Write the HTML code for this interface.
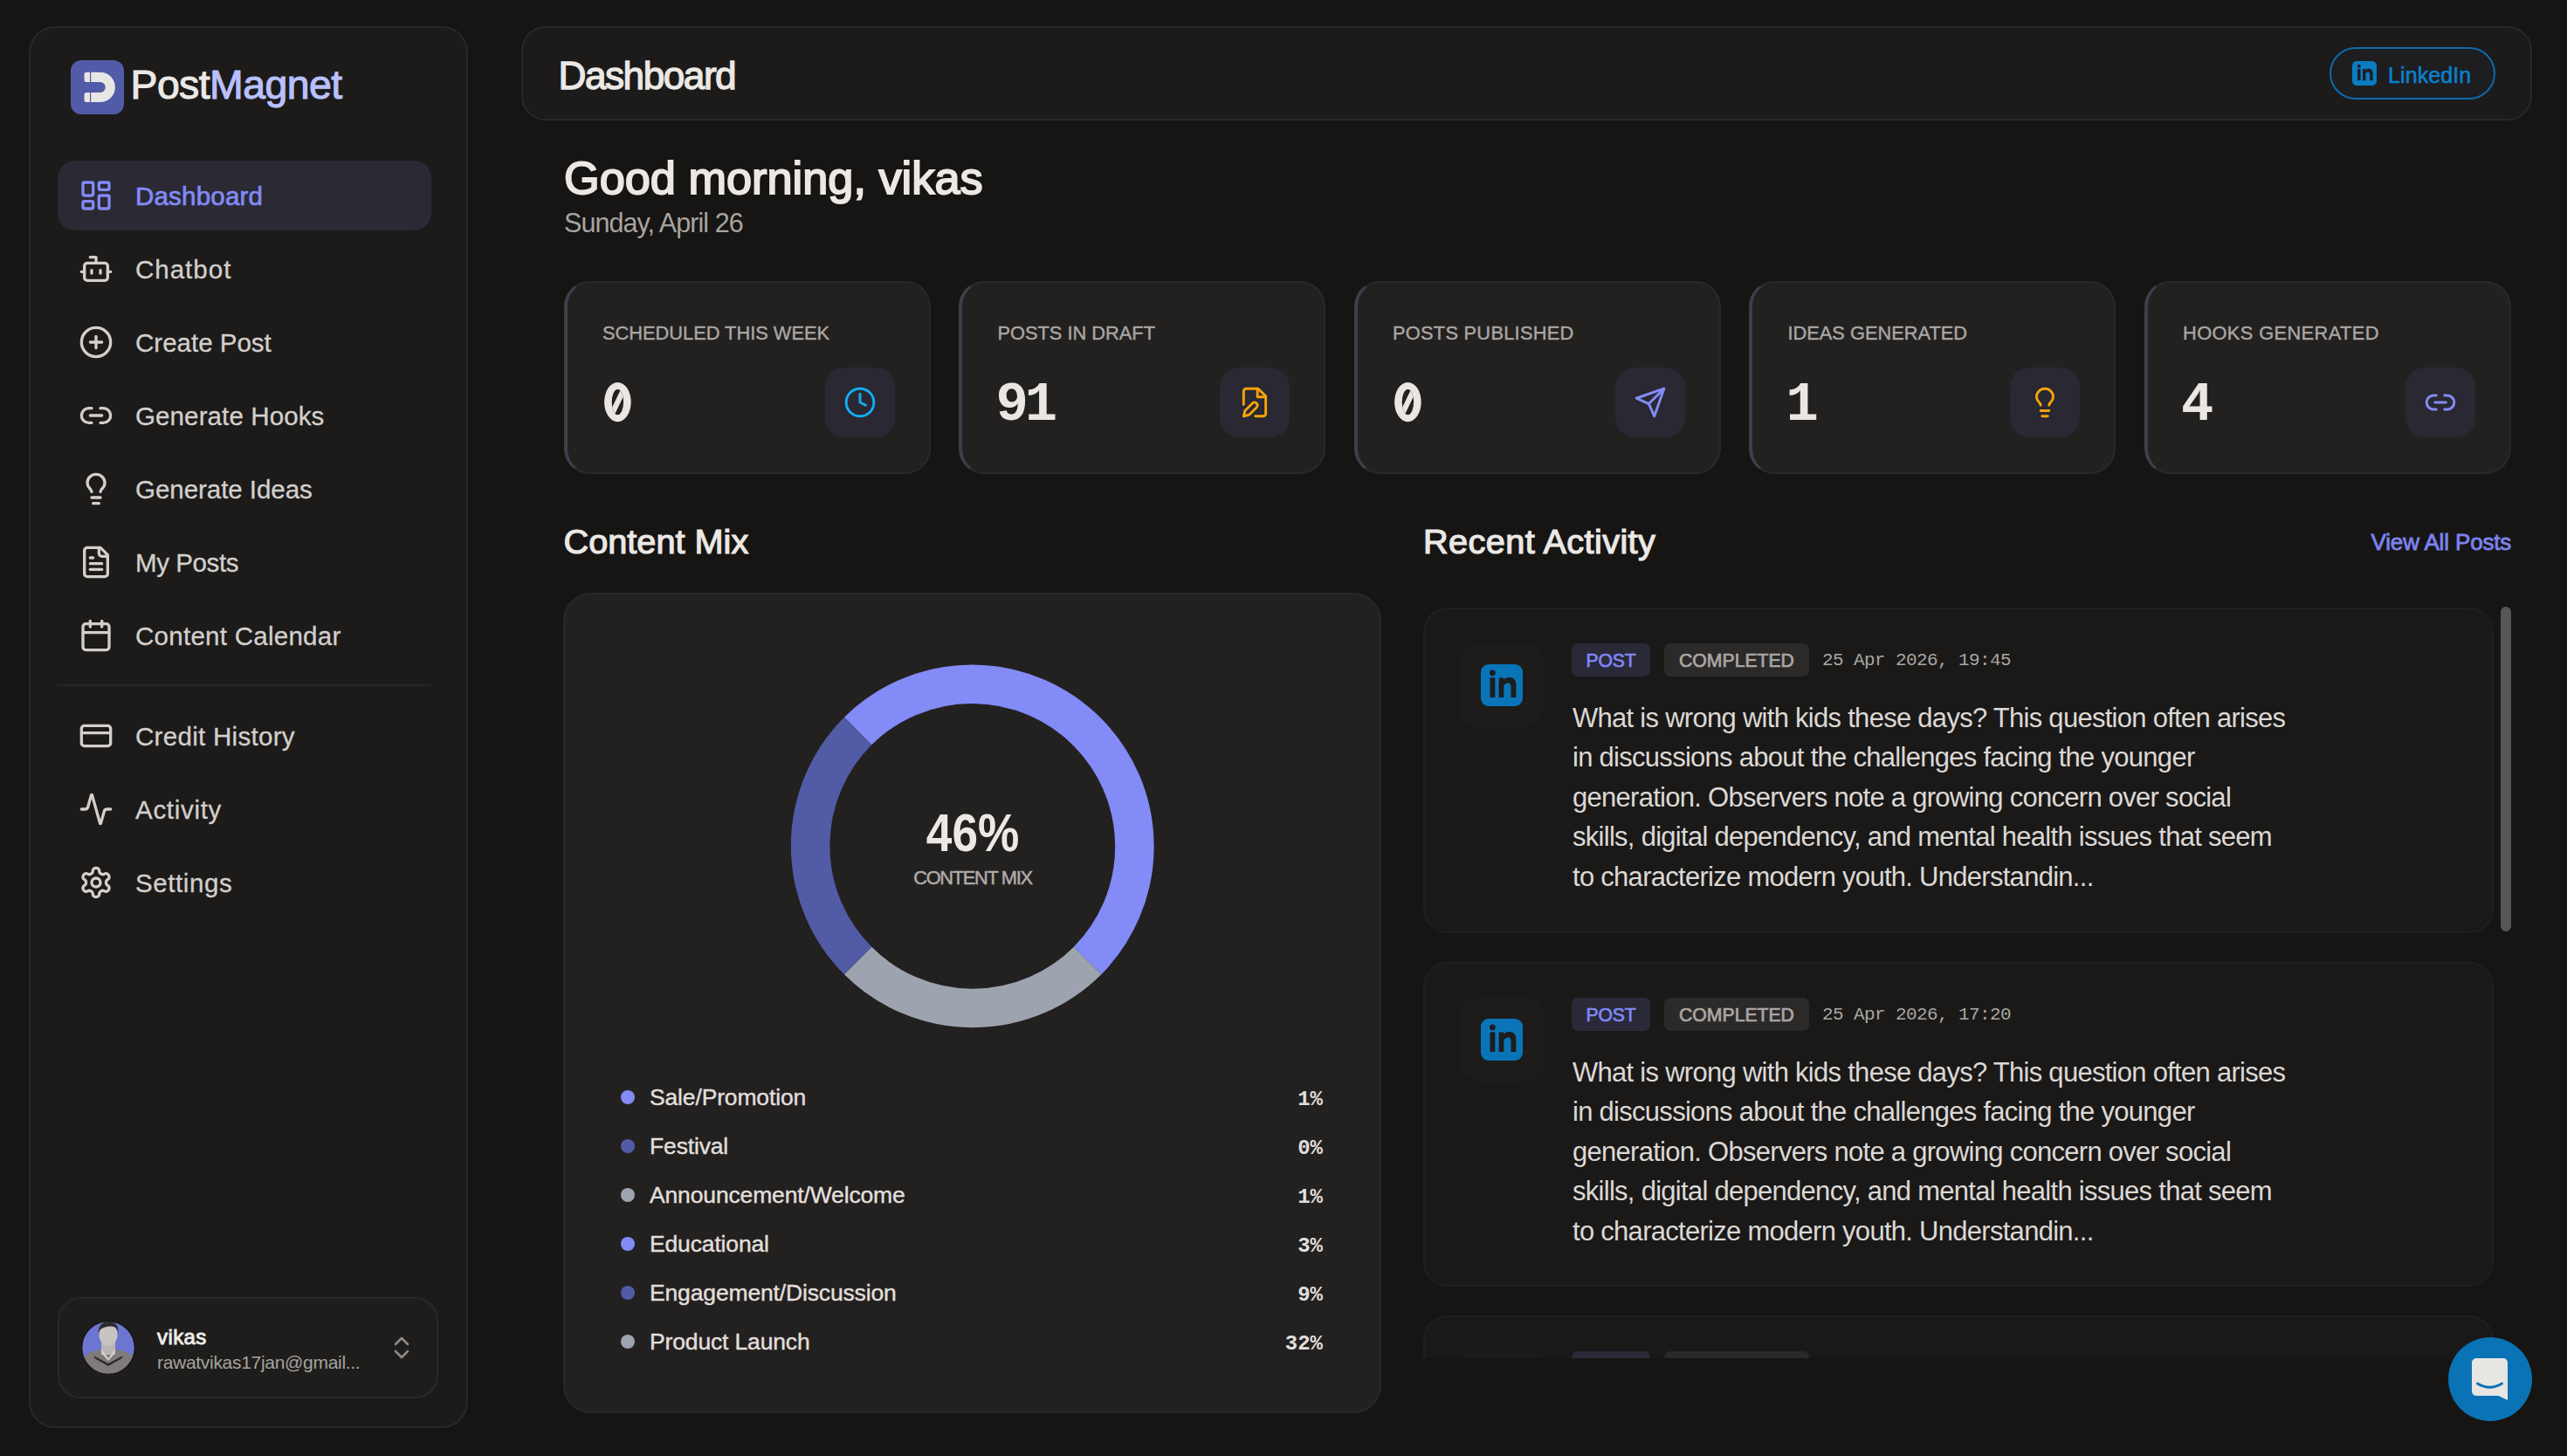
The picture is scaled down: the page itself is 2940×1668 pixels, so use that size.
<!DOCTYPE html>
<html><head><meta charset="utf-8">
<style>
*{box-sizing:border-box;margin:0;padding:0}
html,body{width:2940px;height:1668px;overflow:hidden;background:#161513;font-family:"Liberation Sans",sans-serif;color:#e9e6e3}
.a{position:absolute}
.t{position:absolute;line-height:1;white-space:nowrap}
.mono{font-family:"Liberation Mono",monospace}
svg.i{position:absolute;fill:none;stroke-linecap:round;stroke-linejoin:round}
.panel{position:absolute;background:#1c1b1a;border:2px solid #292827}
.navt{font-size:29.5px;color:#d3cfcc;letter-spacing:0.1px;-webkit-text-stroke:0.3px currentColor}
.card{position:absolute;top:322px;width:420px;height:221px;background:#222120;border:2px solid #2a2928;border-left:4px solid #403e4c;border-radius:29px}
.lbl{font-size:21.8px;color:#aba6a3;letter-spacing:0px;top:370.5px;-webkit-text-stroke:0.4px currentColor}
.val{font-size:62.2px;font-weight:bold;color:#e9e6e3;top:433.8px;letter-spacing:-4px}
.ibox{position:absolute;top:421px;width:80px;height:80px;border-radius:22px;background:#292833}
.leg{position:absolute;left:711px;width:16px;height:16px;border-radius:50%}
.legt{font-size:26.5px;color:#e2dfdc;letter-spacing:-0.15px;left:744px;-webkit-text-stroke:0.4px currentColor}
.legp{font-size:24px;font-weight:bold;color:#e2dfdc;right:1425px}
.act{position:absolute;left:1630px;width:1226px;background:#1a1918;border:2px solid #201f1e;border-radius:28px}
.body{font-size:31px;color:#dcd8d5;letter-spacing:-0.72px;line-height:45.5px;white-space:nowrap}
.badge{position:absolute;height:38px;border-radius:7px;font-size:21.2px;line-height:38px;padding-top:1px;text-align:center;-webkit-text-stroke:0.7px currentColor}
@media (max-width:2000px){html{zoom:0.5}}
</style></head><body>

<!-- SIDEBAR -->
<div class="panel" style="left:33px;top:30px;width:503px;height:1606px;border-radius:30px"></div>
<!-- logo -->
<div class="a" style="left:81px;top:69px;width:61px;height:62px;border-radius:12px;background:#525ba7"></div>
<svg class="a" style="left:81px;top:69px" width="61" height="62" viewBox="0 0 61 62">
  <path d="M18 13.8 H33.8 A17.1 17.1 0 0 1 33.8 48 H18 A2.5 2.5 0 0 1 15.5 45.5 V39.4 A2.5 2.5 0 0 1 18 36.9 H33.8 A5.95 5.95 0 0 0 33.8 25 H18 A2.5 2.5 0 0 1 15.5 22.5 V16.3 A2.5 2.5 0 0 1 18 13.8Z" fill="#e8e6e3"/>
  <rect x="22" y="13" width="1.2" height="36" fill="#525ba7"/>
</svg>
<div class="t" style="left:149.5px;top:73.8px;font-size:46.4px;letter-spacing:-0.56px;-webkit-text-stroke:1.1px currentColor;color:#ebe8e5"><span>Post</span><span style="color:#b9c0fd;-webkit-text-stroke:1.1px #b9c0fd">Magnet</span></div>

<!-- nav -->
<div class="a" style="left:66px;top:184px;width:428px;height:80px;border-radius:20px;background:#2a2934"></div>
<svg class="i" style="left:90px;top:204px;stroke:#838af5" width="40" height="40" viewBox="0 0 24 24" stroke-width="2"><rect x="3" y="3" width="7" height="9" rx="1"/><rect x="14" y="3" width="7" height="5" rx="1"/><rect x="14" y="12" width="7" height="9" rx="1"/><rect x="3" y="16" width="7" height="5" rx="1"/></svg>
<div class="t navt" style="left:155px;top:210px;color:#838af5;letter-spacing:0.4px;-webkit-text-stroke:0.7px currentColor;letter-spacing:0.2px">Dashboard</div>
<svg class="i" style="left:90px;top:288px;stroke:#d3cfcc" width="40" height="40" viewBox="0 0 24 24" stroke-width="2"><path d="M12 8V4H8"/><rect width="16" height="12" x="4" y="8" rx="2"/><path d="M2 14h2"/><path d="M20 14h2"/><path d="M15 13v2"/><path d="M9 13v2"/></svg>
<div class="t navt" style="left:155px;top:294px;color:#d3cfcc;letter-spacing:1.0px">Chatbot</div>
<svg class="i" style="left:90px;top:372px;stroke:#d3cfcc" width="40" height="40" viewBox="0 0 24 24" stroke-width="2"><circle cx="12" cy="12" r="10"/><path d="M8 12h8"/><path d="M12 8v8"/></svg>
<div class="t navt" style="left:155px;top:378px;color:#d3cfcc;letter-spacing:0.0px">Create Post</div>
<svg class="i" style="left:90px;top:456px;stroke:#d3cfcc" width="40" height="40" viewBox="0 0 24 24" stroke-width="2"><path d="M9 17H7A5 5 0 0 1 7 7h2"/><path d="M15 7h2a5 5 0 1 1 0 10h-2"/><line x1="8" x2="16" y1="12" y2="12"/></svg>
<div class="t navt" style="left:155px;top:462px;color:#d3cfcc;letter-spacing:0.12px">Generate Hooks</div>
<svg class="i" style="left:90px;top:540px;stroke:#d3cfcc" width="40" height="40" viewBox="0 0 24 24" stroke-width="2"><path d="M15 14c.2-1 .7-1.7 1.5-2.5 1-.9 1.5-2.2 1.5-3.5A6 6 0 0 0 6 8c0 1 .2 2.2 1.5 3.5.7.7 1.3 1.5 1.5 2.5"/><path d="M9 18h6"/><path d="M10 22h4"/></svg>
<div class="t navt" style="left:155px;top:546px;color:#d3cfcc;letter-spacing:-0.04px">Generate Ideas</div>
<svg class="i" style="left:90px;top:624px;stroke:#d3cfcc" width="40" height="40" viewBox="0 0 24 24" stroke-width="2"><path d="M15 2H6a2 2 0 0 0-2 2v16a2 2 0 0 0 2 2h12a2 2 0 0 0 2-2V7Z"/><path d="M14 2v4a2 2 0 0 0 2 2h4"/><path d="M10 9H8"/><path d="M16 13H8"/><path d="M16 17H8"/></svg>
<div class="t navt" style="left:155px;top:630px;color:#d3cfcc;letter-spacing:-0.4px">My Posts</div>
<svg class="i" style="left:90px;top:708px;stroke:#d3cfcc" width="40" height="40" viewBox="0 0 24 24" stroke-width="2"><path d="M8 2v4"/><path d="M16 2v4"/><rect width="18" height="18" x="3" y="4" rx="2"/><path d="M3 10h18"/></svg>
<div class="t navt" style="left:155px;top:714px;color:#d3cfcc;letter-spacing:0.27px">Content Calendar</div>
<svg class="i" style="left:90px;top:823px;stroke:#d3cfcc" width="40" height="40" viewBox="0 0 24 24" stroke-width="2"><rect width="20" height="14" x="2" y="5" rx="2"/><line x1="2" x2="22" y1="10" y2="10"/></svg>
<div class="t navt" style="left:155px;top:829px;color:#d3cfcc;letter-spacing:0.3px">Credit History</div>
<svg class="i" style="left:90px;top:907px;stroke:#d3cfcc" width="40" height="40" viewBox="0 0 24 24" stroke-width="2"><path d="M22 12h-2.48a2 2 0 0 0-1.93 1.46l-2.35 8.36a.25.25 0 0 1-.48 0L9.24 2.18a.25.25 0 0 0-.48 0l-2.35 8.36A2 2 0 0 1 4.49 12H2"/></svg>
<div class="t navt" style="left:155px;top:913px;color:#d3cfcc;letter-spacing:0.7px">Activity</div>
<svg class="i" style="left:90px;top:991px;stroke:#d3cfcc" width="40" height="40" viewBox="0 0 24 24" stroke-width="2"><path d="M12.22 2h-.44a2 2 0 0 0-2 2v.18a2 2 0 0 1-1 1.73l-.43.25a2 2 0 0 1-2 0l-.15-.08a2 2 0 0 0-2.73.73l-.22.38a2 2 0 0 0 .73 2.73l.15.1a2 2 0 0 1 1 1.72v.51a2 2 0 0 1-1 1.74l-.15.09a2 2 0 0 0-.73 2.73l.22.38a2 2 0 0 0 2.73.73l.15-.08a2 2 0 0 1 2 0l.43.25a2 2 0 0 1 1 1.73V20a2 2 0 0 0 2 2h.44a2 2 0 0 0 2-2v-.18a2 2 0 0 1 1-1.73l.43-.25a2 2 0 0 1 2 0l.15.08a2 2 0 0 0 2.73-.73l.22-.39a2 2 0 0 0-.73-2.73l-.15-.08a2 2 0 0 1-1-1.74v-.5a2 2 0 0 1 1-1.74l.15-.09a2 2 0 0 0 .73-2.73l-.22-.38a2 2 0 0 0-2.73-.73l-.15.08a2 2 0 0 1-2 0l-.43-.25a2 2 0 0 1-1-1.73V4a2 2 0 0 0-2-2z"/><circle cx="12" cy="12" r="3"/></svg>
<div class="t navt" style="left:155px;top:997px;color:#d3cfcc;letter-spacing:0.6px">Settings</div>
<div class="a" style="left:66px;top:784px;width:428px;height:2px;background:#272625"></div>

<!-- user card -->
<div class="a" style="left:66px;top:1486px;width:436px;height:116px;border-radius:26px;background:#1e1d1c;border:2px solid #2a2928"></div>

<!-- HEADER -->
<div class="panel" style="left:597px;top:30px;width:2303px;height:108px;border-radius:28px"></div>
<div class="t" style="left:639.5px;top:64.5px;font-size:44.2px;letter-spacing:-1.5px;-webkit-text-stroke:1.3px currentColor;color:#ebe8e5">Dashboard</div>


<!-- user card content -->
<svg class="a" style="left:92px;top:1512px" width="64" height="64" viewBox="-2 -2 64 64">
  <defs><clipPath id="av"><circle cx="30" cy="30" r="30"/></clipPath></defs>
  <g clip-path="url(#av)">
    <rect x="-2" y="-2" width="64" height="64" fill="#6c76d2"/>
    <path d="M-2 44 Q6 35 20 32 L30 38 L40 32 Q54 35 62 42 V62 H-2Z" fill="#7e7b7a"/>
    <rect x="22" y="22" width="16" height="16" fill="#b9b6b4"/>
    <path d="M22 31 L30 42 L38 31 L38 36 L30 45 L22 36Z" fill="#d0cdcb"/>
    <ellipse cx="30" cy="15" rx="10.5" ry="13" fill="#c6c3c1"/>
    <path d="M18.5 14 Q18 1 30 0 Q42 0 41.5 13 Q40 6 34 5.5 Q26 5 21 9 Q19.5 11 18.5 14Z" fill="#2e2c2b"/>
    <path d="M13 39 L30 48 L47 39 L45 42.5 L30 51 L15 42.5Z" fill="#2c2a29"/>
  </g>
  <circle cx="30" cy="30" r="30.5" fill="none" stroke="#181716" stroke-width="1.5"/>
</svg>
<div class="t" style="left:180px;top:1520px;font-size:24px;color:#eeebe8;letter-spacing:0.4px;-webkit-text-stroke:0.9px currentColor">vikas</div>
<div class="t" style="left:180px;top:1550px;font-size:21px;color:#a7a39f;letter-spacing:-0.3px">rawatvikas17jan@gmail...</div>
<svg class="i" style="left:448px;top:1530px;stroke:#8d8986" width="24" height="28" viewBox="0 0 24 28" stroke-width="2.6"><path d="M5 10 L12 3 L19 10"/><path d="M5 18 L12 25 L19 18"/></svg>

<!-- LinkedIn pill -->
<div class="a" style="left:2668px;top:54px;width:190px;height:60px;border-radius:30px;border:2px solid #0d6aae;background:#1e1d20"></div>
<svg class="a" style="left:2694px;top:70px" width="28" height="28" viewBox="0 0 48 48">
  <rect width="48" height="48" rx="9" fill="#0a7cc2"/>
  <rect x="10.5" y="15.4" width="5.8" height="22.6" fill="#1e1d20"/><circle cx="13.4" cy="9.8" r="3.4" fill="#1e1d20"/>
  <path d="M20.7 15.4h5.6v2.6c1.3-1.9 3.6-3 6.2-3 5.6 0 7.9 3.6 7.9 8.4V38h-5.9v-12c0-2.6-1-4.4-3.3-4.4s-4.9 1.8-4.9 4.4V38h-5.6Z" fill="#1e1d20"/>
</svg>
<div class="t" style="left:2735px;top:74px;font-size:25px;color:#0b80cc;letter-spacing:0.1px;-webkit-text-stroke:0.6px currentColor">LinkedIn</div>

<!-- greeting -->
<div class="t" style="left:646px;top:177.5px;font-size:52.3px;letter-spacing:0px;-webkit-text-stroke:1.9px currentColor;color:#ebe8e5">Good morning, vikas</div>
<div class="t" style="left:646px;top:240px;font-size:30.5px;letter-spacing:-0.95px;color:#a9a4a0">Sunday, April 26</div>

<!-- stat cards -->
<div class="card" style="left:645.5px"></div>
<div class="t lbl" style="left:690.0px">SCHEDULED THIS WEEK</div>
<svg class="a" style="left:691.9px;top:438px" width="31" height="46" viewBox="0 0 31 46"><defs><clipPath id="zc645"><ellipse cx="15.4" cy="22.6" rx="6.7" ry="14.6"/></clipPath></defs><ellipse cx="15.4" cy="22.6" rx="15.3" ry="22.6" fill="#e9e6e3"/><ellipse cx="15.4" cy="22.6" rx="6.7" ry="14.6" fill="#222120"/><line x1="8" y1="38" x2="23" y2="7" stroke="#e9e6e3" stroke-width="6.2" clip-path="url(#zc645)"/></svg>
<div class="ibox" style="left:944.5px"></div>
<svg class="i" style="left:965.5px;top:442px;stroke:#12aef0" width="38" height="38" viewBox="0 0 24 24" stroke-width="1.85"><circle cx="12" cy="12" r="10"/><polyline points="12 6 12 12 16 14"/></svg>
<div class="card" style="left:1098.0px"></div>
<div class="t lbl" style="left:1142.5px">POSTS IN DRAFT</div>
<div class="t val mono" style="left:1140.5px">91</div>
<div class="ibox" style="left:1397.0px"></div>
<svg class="i" style="left:1418.0px;top:442px;stroke:#f5a30b" width="38" height="38" viewBox="0 0 24 24" stroke-width="1.85"><path d="M4 13.5V4a2 2 0 0 1 2-2h8.5L20 7.5V20a2 2 0 0 1-2 2h-5.5"/><polyline points="14 2 14 8 20 8"/><path d="M10.42 12.61a2.1 2.1 0 1 1 2.97 2.97L7.95 21 4 22l.99-3.95 5.43-5.44Z"/></svg>
<div class="card" style="left:1550.5px"></div>
<div class="t lbl" style="left:1595.0px;letter-spacing:0.27px">POSTS PUBLISHED</div>
<svg class="a" style="left:1596.9px;top:438px" width="31" height="46" viewBox="0 0 31 46"><defs><clipPath id="zc1550"><ellipse cx="15.4" cy="22.6" rx="6.7" ry="14.6"/></clipPath></defs><ellipse cx="15.4" cy="22.6" rx="15.3" ry="22.6" fill="#e9e6e3"/><ellipse cx="15.4" cy="22.6" rx="6.7" ry="14.6" fill="#222120"/><line x1="8" y1="38" x2="23" y2="7" stroke="#e9e6e3" stroke-width="6.2" clip-path="url(#zc1550)"/></svg>
<div class="ibox" style="left:1849.5px"></div>
<svg class="i" style="left:1870.5px;top:442px;stroke:#838bf6" width="38" height="38" viewBox="0 0 24 24" stroke-width="1.85"><path d="m22 2-7 20-4-9-9-4Z"/><path d="M22 2 11 13"/></svg>
<div class="card" style="left:2003.0px"></div>
<div class="t lbl" style="left:2047.5px">IDEAS GENERATED</div>
<div class="t val mono" style="left:2045.5px">1</div>
<div class="ibox" style="left:2302.0px"></div>
<svg class="i" style="left:2323.0px;top:442px;stroke:#f5a30b" width="38" height="38" viewBox="0 0 24 24" stroke-width="1.85"><path d="M15 14c.2-1 .7-1.7 1.5-2.5 1-.9 1.5-2.2 1.5-3.5A6 6 0 0 0 6 8c0 1 .2 2.2 1.5 3.5.7.7 1.3 1.5 1.5 2.5"/><path d="M9 18h6"/><path d="M10 22h4"/></svg>
<div class="card" style="left:2455.5px"></div>
<div class="t lbl" style="left:2500.0px;letter-spacing:0.4px">HOOKS GENERATED</div>
<div class="t val mono" style="left:2498.0px">4</div>
<div class="ibox" style="left:2754.5px"></div>
<svg class="i" style="left:2775.5px;top:442px;stroke:#838bf6" width="38" height="38" viewBox="0 0 24 24" stroke-width="1.85"><path d="M9 17H7A5 5 0 0 1 7 7h2"/><path d="M15 7h2a5 5 0 1 1 0 10h-2"/><line x1="8" x2="16" y1="12" y2="12"/></svg>

<!-- content mix -->
<div class="t" style="left:645.5px;top:600.5px;font-size:39.7px;letter-spacing:0px;-webkit-text-stroke:1.2px currentColor;color:#ebe8e5">Content Mix</div>
<div class="a" style="left:644.5px;top:679px;width:937px;height:940px;border-radius:32px;background:#222120;border:2px solid #292827"></div>
<svg class="a" style="left:645.5px;top:679px" width="936" height="939" viewBox="0 0 936 939">
<path d="M336.58 158.48 A186 186 0 0 1 599.62 421.52" stroke="#838bf6" stroke-width="44.5" fill="none"/><path d="M599.62 421.52 A186 186 0 0 1 336.58 421.52" stroke="#9ea3b0" stroke-width="44.5" fill="none"/><path d="M336.58 421.52 A186 186 0 0 1 336.58 158.48" stroke="#525ba6" stroke-width="44.5" fill="none"/></svg>
<div class="t" style="left:1114px;top:922.6px;font-size:62px;font-weight:bold;letter-spacing:0px;color:#ebe8e5;transform:translateX(-50%) scaleX(0.857)">46%</div>
<div class="t" style="left:1114px;top:994.5px;font-size:21.8px;letter-spacing:-1.3px;color:#b0aba8;transform:translateX(-50%);-webkit-text-stroke:0.5px currentColor">CONTENT MIX</div>
<div class="leg" style="top:1249.3px;background:#838bf6"></div>
<div class="t legt" style="top:1244.3px">Sale/Promotion</div>
<div class="t legp mono" style="top:1247.9px">1%</div>
<div class="leg" style="top:1305.3px;background:#525ba6"></div>
<div class="t legt" style="top:1300.3px">Festival</div>
<div class="t legp mono" style="top:1303.9px">0%</div>
<div class="leg" style="top:1361.3px;background:#9ea3b0"></div>
<div class="t legt" style="top:1356.3px">Announcement/Welcome</div>
<div class="t legp mono" style="top:1359.9px">1%</div>
<div class="leg" style="top:1417.3px;background:#838bf6"></div>
<div class="t legt" style="top:1412.3px">Educational</div>
<div class="t legp mono" style="top:1415.9px">3%</div>
<div class="leg" style="top:1473.3px;background:#525ba6"></div>
<div class="t legt" style="top:1468.3px">Engagement/Discussion</div>
<div class="t legp mono" style="top:1471.9px">9%</div>
<div class="leg" style="top:1529.3px;background:#9ea3b0"></div>
<div class="t legt" style="top:1524.3px">Product Launch</div>
<div class="t legp mono" style="top:1527.9px">32%</div>

<!-- recent activity -->
<div class="t" style="left:1630px;top:601px;font-size:39.7px;letter-spacing:0.4px;-webkit-text-stroke:1.2px currentColor;color:#ebe8e5">Recent Activity</div>
<div class="t" style="left:2715.5px;top:608px;font-size:26px;letter-spacing:-0.15px;-webkit-text-stroke:0.8px currentColor;color:#7c83ee">View All Posts</div>
<div class="a" style="left:1620px;top:695px;width:1260px;height:861px;overflow:hidden">
<div class="act" style="left:10px;top:0.5px;height:373px"></div>
<div class="a" style="left:52px;top:42px;width:96px;height:96px;border-radius:22px;background:#1d1c1b"></div>
<svg class="a" style="left:75.5px;top:66px" width="48" height="48" viewBox="0 0 48 48">
  <rect width="48" height="48" rx="9" fill="#0a74b8"/>
  <rect x="10.5" y="15.4" width="5.8" height="22.6" fill="#1d1c1b"/><circle cx="13.4" cy="9.8" r="3.4" fill="#1d1c1b"/>
  <path d="M20.7 15.4h5.6v2.6c1.3-1.9 3.6-3 6.2-3 5.6 0 7.9 3.6 7.9 8.4V38h-5.9v-12c0-2.6-1-4.4-3.3-4.4s-4.9 1.8-4.9 4.4V38h-5.6Z" fill="#1d1c1b"/>
</svg>
<div class="badge" style="left:180px;top:42px;width:90px;background:#2a2938;color:#7f87f3;letter-spacing:-0.2px">POST</div>
<div class="badge" style="left:286px;top:42px;width:166px;background:#2b2a29;color:#aba6a3;letter-spacing:0px">COMPLETED</div>
<div class="t mono" style="left:467px;top:51px;letter-spacing:-0.6px;font-size:21px;color:#a9a5a1">25 Apr 2026, 19:45</div>
<div class="a body" style="left:181px;top:104.5px">What is wrong with kids these days? This question often arises<br>in discussions about the challenges facing the younger<br>generation. Observers note a growing concern over social<br>skills, digital dependency, and mental health issues that seem<br>to characterize modern youth. Understandin...</div>
<div class="act" style="left:10px;top:406.5px;height:372px"></div>
<div class="a" style="left:52px;top:448px;width:96px;height:96px;border-radius:22px;background:#1d1c1b"></div>
<svg class="a" style="left:75.5px;top:472px" width="48" height="48" viewBox="0 0 48 48">
  <rect width="48" height="48" rx="9" fill="#0a74b8"/>
  <rect x="10.5" y="15.4" width="5.8" height="22.6" fill="#1d1c1b"/><circle cx="13.4" cy="9.8" r="3.4" fill="#1d1c1b"/>
  <path d="M20.7 15.4h5.6v2.6c1.3-1.9 3.6-3 6.2-3 5.6 0 7.9 3.6 7.9 8.4V38h-5.9v-12c0-2.6-1-4.4-3.3-4.4s-4.9 1.8-4.9 4.4V38h-5.6Z" fill="#1d1c1b"/>
</svg>
<div class="badge" style="left:180px;top:448px;width:90px;background:#2a2938;color:#7f87f3;letter-spacing:-0.2px">POST</div>
<div class="badge" style="left:286px;top:448px;width:166px;background:#2b2a29;color:#aba6a3;letter-spacing:0px">COMPLETED</div>
<div class="t mono" style="left:467px;top:457px;letter-spacing:-0.6px;font-size:21px;color:#a9a5a1">25 Apr 2026, 17:20</div>
<div class="a body" style="left:181px;top:510.5px">What is wrong with kids these days? This question often arises<br>in discussions about the challenges facing the younger<br>generation. Observers note a growing concern over social<br>skills, digital dependency, and mental health issues that seem<br>to characterize modern youth. Understandin...</div>
<div class="act" style="left:10px;top:812px;height:372px"></div>
<div class="a" style="left:52px;top:853px;width:96px;height:96px;border-radius:22px;background:#1d1c1b"></div>
<svg class="a" style="left:75.5px;top:877px" width="48" height="48" viewBox="0 0 48 48">
  <rect width="48" height="48" rx="9" fill="#0a74b8"/>
  <rect x="10.5" y="15.4" width="5.8" height="22.6" fill="#1d1c1b"/><circle cx="13.4" cy="9.8" r="3.4" fill="#1d1c1b"/>
  <path d="M20.7 15.4h5.6v2.6c1.3-1.9 3.6-3 6.2-3 5.6 0 7.9 3.6 7.9 8.4V38h-5.9v-12c0-2.6-1-4.4-3.3-4.4s-4.9 1.8-4.9 4.4V38h-5.6Z" fill="#1d1c1b"/>
</svg>
<div class="badge" style="left:180px;top:853px;width:90px;background:#2a2938;color:#7f87f3;letter-spacing:-0.2px">POST</div>
<div class="badge" style="left:286px;top:853px;width:166px;background:#2b2a29;color:#aba6a3;letter-spacing:0px">COMPLETED</div>
<div class="t mono" style="left:467px;top:862px;letter-spacing:-0.6px;font-size:21px;color:#a9a5a1">25 Apr 2026, 17:20</div>
<div class="a body" style="left:181px;top:915.5px">What is wrong with kids these days? This question often arises<br>in discussions about the challenges facing the younger<br>generation. Observers note a growing concern over social<br>skills, digital dependency, and mental health issues that seem<br>to characterize modern youth. Understandin...</div>
</div>
<div class="a" style="left:2864px;top:695px;width:12px;height:372px;border-radius:6px;background:#585756"></div>
<!-- intercom -->
<div class="a" style="left:2804px;top:1532px;width:96px;height:96px;border-radius:50%;background:#0a73b5"></div>
<svg class="a" style="left:2830px;top:1555px" width="44" height="50" viewBox="0 0 44 50">
  <path d="M6 1 H37 A5 5 0 0 1 42 6 V49 L31.5 44 H6 A5 5 0 0 1 1 39 V6 A5 5 0 0 1 6 1Z" fill="#e8e6e3"/>
  <path d="M7.5 30 Q21.5 38.5 35.5 30" stroke="#0a73b5" stroke-width="3" fill="none" stroke-linecap="round"/>
</svg>
</body></html>
